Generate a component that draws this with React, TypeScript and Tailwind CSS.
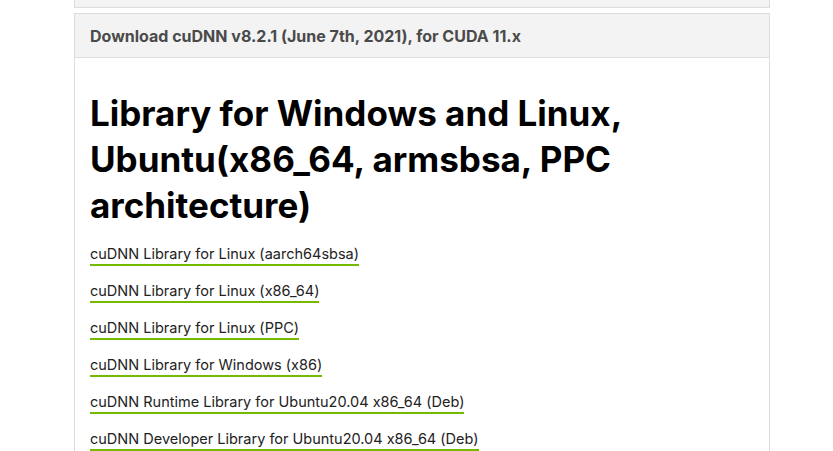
const links = [
  "cuDNN Library for Linux (aarch64sbsa)",
  "cuDNN Library for Linux (x86_64)",
  "cuDNN Library for Linux (PPC)",
  "cuDNN Library for Windows (x86)",
  "cuDNN Runtime Library for Ubuntu20.04 x86_64 (Deb)",
  "cuDNN Developer Library for Ubuntu20.04 x86_64 (Deb)",
];

export default function App() {
  return (
    <div className="h-[451px] overflow-hidden bg-white font-['Inter',sans-serif] [font-feature-settings:'calt'_0]">
      <div className="ml-[74px] w-[696px]">
        <div className="h-[8px] border-x border-b border-[#dcdcdc] bg-[#f3f3f3]" />
        <div className="mt-[5px] border border-[#dcdcdc]">
          <div className="flex h-[44px] items-center border-b border-[#dcdcdc] bg-[#f3f3f3] px-[15px] text-[16px] font-bold text-[#4a4a4a]">
            Download cuDNN v8.2.1 (June 7th, 2021), for CUDA 11.x
          </div>
          <div className="px-[15px] pt-[32px] pb-[40px]">
            <h1 className="mb-[15px] text-[35px] font-bold leading-[46px] text-black">
              Library for Windows and Linux, Ubuntu(x86_64, armsbsa, PPC architecture)
            </h1>
            <div className="flex flex-col items-start gap-[14px]">
              {links.map((l) => (
                <a
                  key={l}
                  href="#"
                  className="border-b-2 border-[#76b900] text-[14.5px] leading-[21px] text-[#222]"
                >
                  {l}
                </a>
              ))}
            </div>
          </div>
        </div>
      </div>
    </div>
  );
}
